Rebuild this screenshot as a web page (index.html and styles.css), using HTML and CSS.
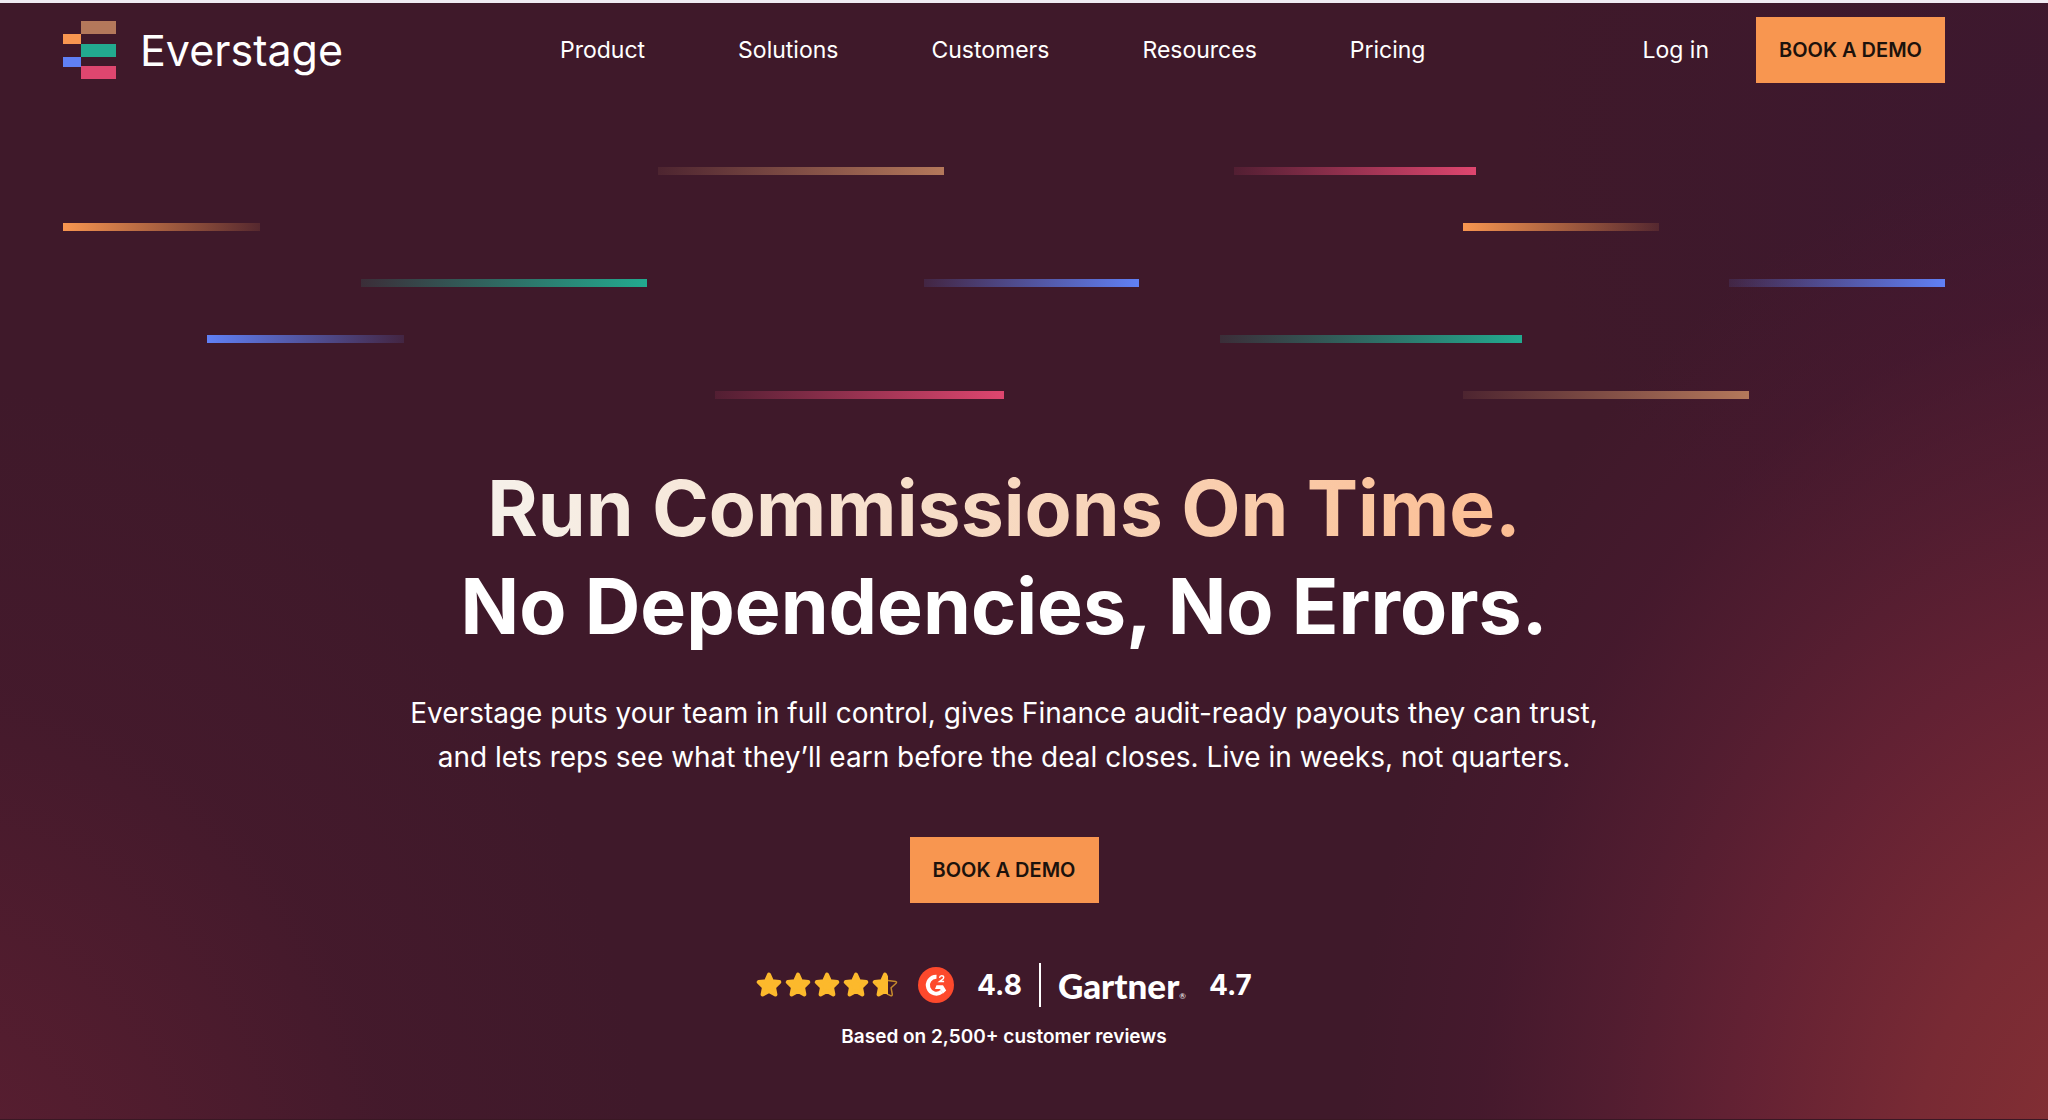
FILE: index.html
```html
<!DOCTYPE html>
<html lang="en">
<head>
<meta charset="utf-8">
<meta name="viewport" content="width=device-width, initial-scale=1">
<title>Everstage</title>
<link rel="stylesheet" href="styles.css">
</head>
<body>
<header class="site-header">
  <a class="brand" href="#">
    <svg class="brand-mark" viewBox="0 0 53 58" aria-hidden="true">
      <path fill="#b4785b" d="M18 0h35v13H18z"/>
      <path fill="#f89650" d="M0 13h18v10H0z"/>
      <path fill="#22aa8f" d="M18 23h35v13H18z"/>
      <path fill="#6080f5" d="M0 36h18v10H0z"/>
      <path fill="#de466f" d="M18 45h35v13H18z"/>
    </svg>
    <span class="brand-name">Everstage</span>
  </a>
  <nav class="main-nav" aria-label="Main">
    <a href="#">Product</a>
    <a href="#">Solutions</a>
    <a href="#">Customers</a>
    <a href="#">Resources</a>
    <a href="#">Pricing</a>
  </nav>
  <div class="header-actions">
    <a class="login" href="#">Log in</a>
    <button class="cta" type="button">BOOK A DEMO</button>
  </div>
</header>
<main class="hero">
  <svg class="streaks" viewBox="0 0 1882 232" preserveAspectRatio="none" aria-hidden="true">
    <defs>
      <linearGradient id="tan"><stop offset="0" stop-color="#b4785b" stop-opacity=".12"/><stop offset="1" stop-color="#b4785b"/></linearGradient>
      <linearGradient id="pink"><stop offset="0" stop-color="#de466f" stop-opacity=".12"/><stop offset="1" stop-color="#de466f"/></linearGradient>
      <linearGradient id="green"><stop offset="0" stop-color="#22aa8f" stop-opacity=".14"/><stop offset="1" stop-color="#22aa8f"/></linearGradient>
      <linearGradient id="blue"><stop offset="0" stop-color="#6080f5" stop-opacity=".12"/><stop offset="1" stop-color="#6080f5"/></linearGradient>
      <linearGradient id="blue-out"><stop offset="0" stop-color="#6080f5"/><stop offset="1" stop-color="#6080f5" stop-opacity=".12"/></linearGradient>
      <linearGradient id="orange-out"><stop offset="0" stop-color="#f89650"/><stop offset="1" stop-color="#f89650" stop-opacity=".12"/></linearGradient>
    </defs>
    <rect x="595" y="0" width="286" height="8" fill="url(#tan)"/>
    <rect x="1171" y="0" width="242" height="8" fill="url(#pink)"/>
    <rect x="0" y="56" width="197" height="8" fill="url(#orange-out)"/>
    <rect x="1400" y="56" width="196" height="8" fill="url(#orange-out)"/>
    <rect x="298" y="112" width="286" height="8" fill="url(#green)"/>
    <rect x="861" y="112" width="215" height="8" fill="url(#blue)"/>
    <rect x="1666" y="112" width="216" height="8" fill="url(#blue)"/>
    <rect x="144" y="168" width="197" height="8" fill="url(#blue-out)"/>
    <rect x="1157" y="168" width="302" height="8" fill="url(#green)"/>
    <rect x="652" y="224" width="289" height="8" fill="url(#pink)"/>
    <rect x="1400" y="224" width="286" height="8" fill="url(#tan)"/>
  </svg>
  <h1 class="headline"><span class="headline-warm">Run Commissions On Time.</span><br>No Dependencies, No Errors.</h1>
  <p class="lede">Everstage puts your team in full control, gives Finance audit-ready payouts they can trust,<br>and lets reps see what they’ll earn before the deal closes. Live in weeks, not quarters.</p>
  <button class="cta" type="button">BOOK A DEMO</button>
  <div class="ratings">
    <svg class="stars" viewBox="0 0 142 28" role="img" aria-label="Four and a half stars">
      <defs>
        <path id="star" d="M13 3.500l3 6.700 7.300.9-5.300 5.100 1.400 7.300-6.400-3.500-6.400 3.500 1.400-7.300-5.300-5.100 7.300-.9z" stroke-width="4" stroke-linejoin="round"/>
        <clipPath id="half"><path d="M0 0h16v28H0z"/></clipPath>
      </defs>
      <g fill="#fcb92c" stroke="#fcb92c">
        <use href="#star"/><use href="#star" x="29"/><use href="#star" x="58"/><use href="#star" x="87"/>
        <g transform="translate(116)" clip-path="url(#half)"><use href="#star"/></g>
      </g>
      <path d="M132 9.500l7.500.9q1.700.4.600 1.800l-5 4.600 1.200 6.700q0 1.800-1.800 1.100l-2.500-1.300" fill="none" stroke="#c58a2c" stroke-width="1.500" stroke-linejoin="round"/>
    </svg>
    <svg class="g2" viewBox="0 0 36 36" role="img" aria-label="G2">
      <circle cx="18" cy="18" r="18" fill="#fd492c"/>
      <path d="M18.500 9.800a8.400 8.400 0 1 0 5.300 14.700" fill="none" stroke="#fff" stroke-width="4"/>
      <path d="M18.500 18.200h6.500l3.200 5.400-3.200 3-3-4.600h-5z" fill="#fff"/>
      <path d="M21.500 10.800q.3-2 2.200-2 2 0 2 1.700 0 1.200-1.600 2.200l-2.500 1.800h4.500" fill="none" stroke="#fff" stroke-width="1.400"/>
    </svg>
    <strong class="score">4.8</strong>
    <span class="divider"></span>
    <span class="gartner">Gartner<small class="reg">®</small></span>
    <strong class="score">4.7</strong>
  </div>
  <p class="reviews">Based on 2,500+ customer reviews</p>
</main>
</body>
</html>
```
FILE: styles.css
```css
* { box-sizing: border-box; }

body {
  margin: 0;
  min-height: 100vh;
  border-top: 3px solid #f0ebf3;
  border-bottom: 1px solid #3a1824;
  font-family: Inter, "Liberation Sans", sans-serif;
  color: #fff;
  background:
    radial-gradient(ellipse 38% 94% at 104% 106%, #883133 0%, #782a34 28%, rgba(102, 34, 52, .95) 50%, rgba(88, 30, 50, .75) 68%, rgba(76, 25, 48, .45) 84%, rgba(64, 25, 42, 0) 100%),
    radial-gradient(ellipse 36% 76% at -4% 110%, #5c1f32 0%, rgba(84, 29, 47, .85) 32%, rgba(72, 26, 45, .5) 65%, rgba(64, 25, 42, 0) 100%),
    radial-gradient(ellipse 26% 44% at 100% 12%, #3d182f 0%, rgba(61, 24, 47, 0) 100%),
    #3f192a;
}

a { color: inherit; text-decoration: none; }

.site-header {
  display: flex;
  justify-content: space-between;
  align-items: center;
  height: 94px;
  padding: 0 103px 0 63px;
}

.brand { display: flex; align-items: center; gap: 24px; }
.brand-mark { width: 53px; height: 58px; }
.brand-name { font-size: 43px; line-height: 56px; }

.main-nav { display: flex; gap: 93px; font-size: 23px; line-height: 32px; }

.header-actions {
  display: flex;
  align-items: center;
  gap: 47px;
  font-size: 23px;
}

.cta {
  height: 66px;
  padding: 0 23px;
  border: 0;
  background: #f89650;
  color: #1c120c;
  font: 600 20px/24px Inter, "Liberation Sans", sans-serif;
}

.hero {
  display: flex;
  flex-direction: column;
  align-items: center;
  padding: 70px 103px 48px 63px;
  text-align: center;
}

.streaks { width: 100%; height: 232px; }

.headline {
  margin: 60px 0 0;
  font-size: 77px;
  font-weight: 700;
  line-height: 98px;
}

.headline-warm {
  background: linear-gradient(90deg, #f6f1ea, #f7dcc6 45%, #fcbd92);
  background-clip: text;
  color: transparent;
}

.lede { margin: 36px 0 0; font-size: 28px; line-height: 44px; }

.hero .cta { margin-top: 58px; }

.ratings { display: flex; align-items: center; margin-top: 60px; height: 44px; }
.stars { width: 142px; height: 28px; }
.g2 { width: 36px; height: 36px; margin: 0 23px 0 20px; }
.score { font-size: 28px; font-weight: 700; line-height: 36px; }
.divider { width: 2px; height: 44px; margin: 0 17px; background: #fff; }
.gartner { display: flex; align-items: baseline; margin-right: 23px; font: 900 35px/44px Lato, Inter, sans-serif; }
.reg { font-size: 8px; font-weight: 400; line-height: 8px; }

.reviews { margin: 16px 0 0; font-size: 19px; font-weight: 600; line-height: 28px; }
```
